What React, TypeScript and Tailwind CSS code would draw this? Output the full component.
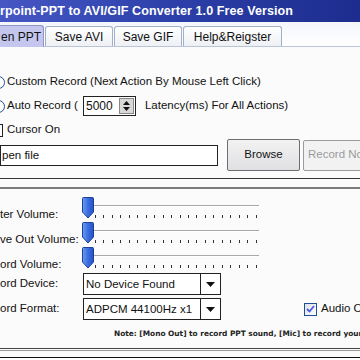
import React from 'react'

const font = { fontFamily: '"Liberation Sans", Arial, sans-serif' }

function Thumb() {
  return (
    <svg width="12" height="22" viewBox="0 0 12 22" className="shrink-0">
      <defs>
        <linearGradient id="tg" x1="0" x2="1" y1="0" y2="0">
          <stop offset="0" stopColor="#6f9cf0" />
          <stop offset="0.5" stopColor="#3a6ee0" />
          <stop offset="1" stopColor="#2452c4" />
        </linearGradient>
      </defs>
      <path d="M1.5 0.5 H10.5 Q11.5 0.5 11.5 1.5 V15 L6 21 L0.5 15 V1.5 Q0.5 0.5 1.5 0.5 Z" fill="url(#tg)" stroke="#1d3f9c" />
    </svg>
  )
}

function Slider({ label }: { label: string }) {
  const ticks = Array.from({ length: 20 }, (_, i) => i)
  return (
    <div className="flex h-[25px] items-start">
      <div className="w-[82px] shrink-0 pt-[9px] text-[11.5px] text-[#111] whitespace-nowrap">{label}</div>
      <div className="relative w-[177px] h-[25px]">
        <div className="absolute left-[10px] right-0 top-[8px] h-[2px] border-t border-[#a9a9a9] border-b border-b-white" />
        <div className="absolute left-0 top-0">
          <Thumb />
        </div>
        {ticks.map(i => (
          <div
            key={i}
            className="absolute top-[18px] w-[1px] h-[3px] bg-[#333]"
            style={{ left: 13 + i * 8.45 }}
          />
        ))}
      </div>
    </div>
  )
}

function Combo({ value, width }: { value: string; width: number }) {
  return (
    <div className="flex h-[22px] shrink-0 border border-[#222] bg-white" style={{ width }}>
      <div className="flex-1 px-[2px] text-[11.5px] leading-[20px] text-[#111] whitespace-nowrap overflow-hidden">{value}</div>
      <div className="w-[20px] border-l border-[#222] flex items-center justify-center">
        <svg width="9" height="5" viewBox="0 0 9 5"><path d="M0 0 H9 L4.5 5 Z" fill="#111" /></svg>
      </div>
    </div>
  )
}

export default function App() {
  return (
    <div className="w-[360px] h-[360px] overflow-hidden bg-[#fbfbfb] flex flex-col" style={font}>
      {/* title bar */}
      <div className="h-[22px] shrink-0 bg-gradient-to-r from-[#4657c4] via-[#2c3fa8] to-[#1d2c8e] flex items-center whitespace-nowrap">
        <span className="text-white font-bold text-[12.5px] tracking-[0.1px]">
          rpoint-PPT to AVI/GIF Converter 1.0 Free Version
        </span>
      </div>

      {/* tabs */}
      <div className="h-[25px] shrink-0 flex items-end bg-gradient-to-b from-[#f4f6fb] to-[#ffffff] border-b border-[#b9c4d8] whitespace-nowrap text-[12px] text-[#111]">
        <div className="h-[22px] w-[44px] shrink-0 bg-[#c4c6ee] border-r border-t border-[#8f97c9] rounded-tr-[3px] flex items-center pl-[1px] -mb-[1px]">en PPT</div>
        <div className="h-[20px] w-[68px] shrink-0 ml-[1px] border border-b-0 border-[#9fb0c8] rounded-t-[3px] bg-gradient-to-b from-white to-[#eef0f4] flex items-center justify-center">Save AVI</div>
        <div className="h-[20px] w-[68px] shrink-0 ml-[1px] border border-b-0 border-[#9fb0c8] rounded-t-[3px] bg-gradient-to-b from-white to-[#eef0f4] flex items-center justify-center">Save GIF</div>
        <div className="h-[20px] w-[99px] shrink-0 ml-[1px] border border-b-0 border-[#9fb0c8] rounded-t-[3px] bg-gradient-to-b from-white to-[#eef0f4] flex items-center justify-center">Help&amp;Reigster</div>
      </div>

      {/* options */}
      <div className="mt-[27px] flex flex-col text-[11.5px] text-[#111] whitespace-nowrap">
        <div className="flex items-center h-[16px] gap-[2px]">
          <div className="w-[13px] h-[13px] shrink-0 ml-[-8px] rounded-full border border-[#1e4f9a] bg-white" />
          <span>Custom Record (Next Action By Mouse Left Click)</span>
        </div>
        <div className="flex items-center h-[20px] mt-[6px]">
          <div className="w-[13px] h-[13px] shrink-0 ml-[-8px] rounded-full border border-[#1e4f9a] bg-white" />
          <span className="ml-[2px]">Auto Record (</span>
          <div className="ml-[5px] w-[53px] shrink-0 h-[20px] border border-[#222] bg-white flex items-center">
            <span className="flex-1 pl-[2px] leading-[18px] text-[12px]">5000</span>
            <div className="w-[15px] h-[16px] mr-[1px] bg-[#d8d8d8] border border-[#888] flex flex-col items-center justify-center gap-[2px]">
              <svg width="7" height="4" viewBox="0 0 7 4"><path d="M0 4 L3.5 0 L7 4 Z" fill="#111" /></svg>
              <svg width="7" height="4" viewBox="0 0 7 4"><path d="M0 0 L7 0 L3.5 4 Z" fill="#111" /></svg>
            </div>
          </div>
          <span className="ml-[9px]">Latency(ms) For All Actions)</span>
        </div>
        <div className="flex items-center h-[16px] mt-[6px] gap-[4px]">
          <div className="w-[13px] h-[13px] shrink-0 ml-[-10px] border border-[#222] bg-white" />
          <span>Cursor On</span>
        </div>
      </div>

      {/* file row */}
      <div className="mt-[1px] flex items-center whitespace-nowrap text-[11.5px]">
        <div className="w-[218px] shrink-0 h-[21px] border border-[#222] bg-white px-[1px] leading-[19px] text-[#111]">pen file</div>
        <div className="ml-[9px] w-[73px] shrink-0 h-[32px] rounded-[2px] border border-[#6e6e6e] bg-gradient-to-b from-[#f2f2f2] to-[#e0e0e4] flex items-center justify-center text-[#111]">Browse</div>
        <div className="ml-[3px] w-[80px] h-[31px] shrink-0 rounded-[2px] border border-[#9a9a9a] bg-[#f2f2f2] flex items-center pl-[4px] text-[#9b9b9b]">Record Now</div>
      </div>

      <div className="mt-[7px] h-[1px] shrink-0 bg-[#333]" />
      <div className="mt-[8px] h-[2px] shrink-0 bg-[#7c7c7c]" />

      {/* volumes */}
      <div className="mt-[8px] flex flex-col">
        <Slider label="ter Volume:" />
        <Slider label="ve Out Volume:" />
        <Slider label="ord Volume:" />
      </div>

      {/* devices */}
      <div className="mt-[1px] flex flex-col gap-[3px] text-[11.5px] text-[#111] whitespace-nowrap">
        <div className="flex items-center">
          <div className="w-[83px] shrink-0">ord Device:</div>
          <Combo value="No Device Found" width={138} />
        </div>
        <div className="flex items-center">
          <div className="w-[83px] shrink-0">ord Format:</div>
          <Combo value="ADPCM 44100Hz x1" width={138} />
          <div className="ml-[83px] w-[13px] h-[13px] shrink-0 border border-[#1d4f91] bg-gradient-to-br from-[#e0e0e8] to-white flex items-center justify-center">
            <svg width="9" height="8" viewBox="0 0 9 8"><path d="M1 4 L3.5 6.5 L8 1" fill="none" stroke="#4a5ae0" strokeWidth="1.8" /></svg>
          </div>
          <span className="ml-[4px]">Audio On</span>
        </div>
      </div>

      <div className="mt-[8px] pl-[114px] overflow-hidden whitespace-nowrap text-[7.4px] font-bold text-[#222]" style={{ fontFamily: 'Verdana, "DejaVu Sans", sans-serif' }}>
        Note: [Mono Out] to record PPT sound, [Mic] to record your sound
      </div>

      <div className="mt-[9px] h-[1px] shrink-0 bg-[#444]" />
      <div className="mt-[1px] h-[1px] shrink-0 bg-[#999]" />
      <div className="mt-[6px] h-[1px] shrink-0 bg-[#111]" />
      <div className="flex-1 bg-white" />
    </div>
  )
}
